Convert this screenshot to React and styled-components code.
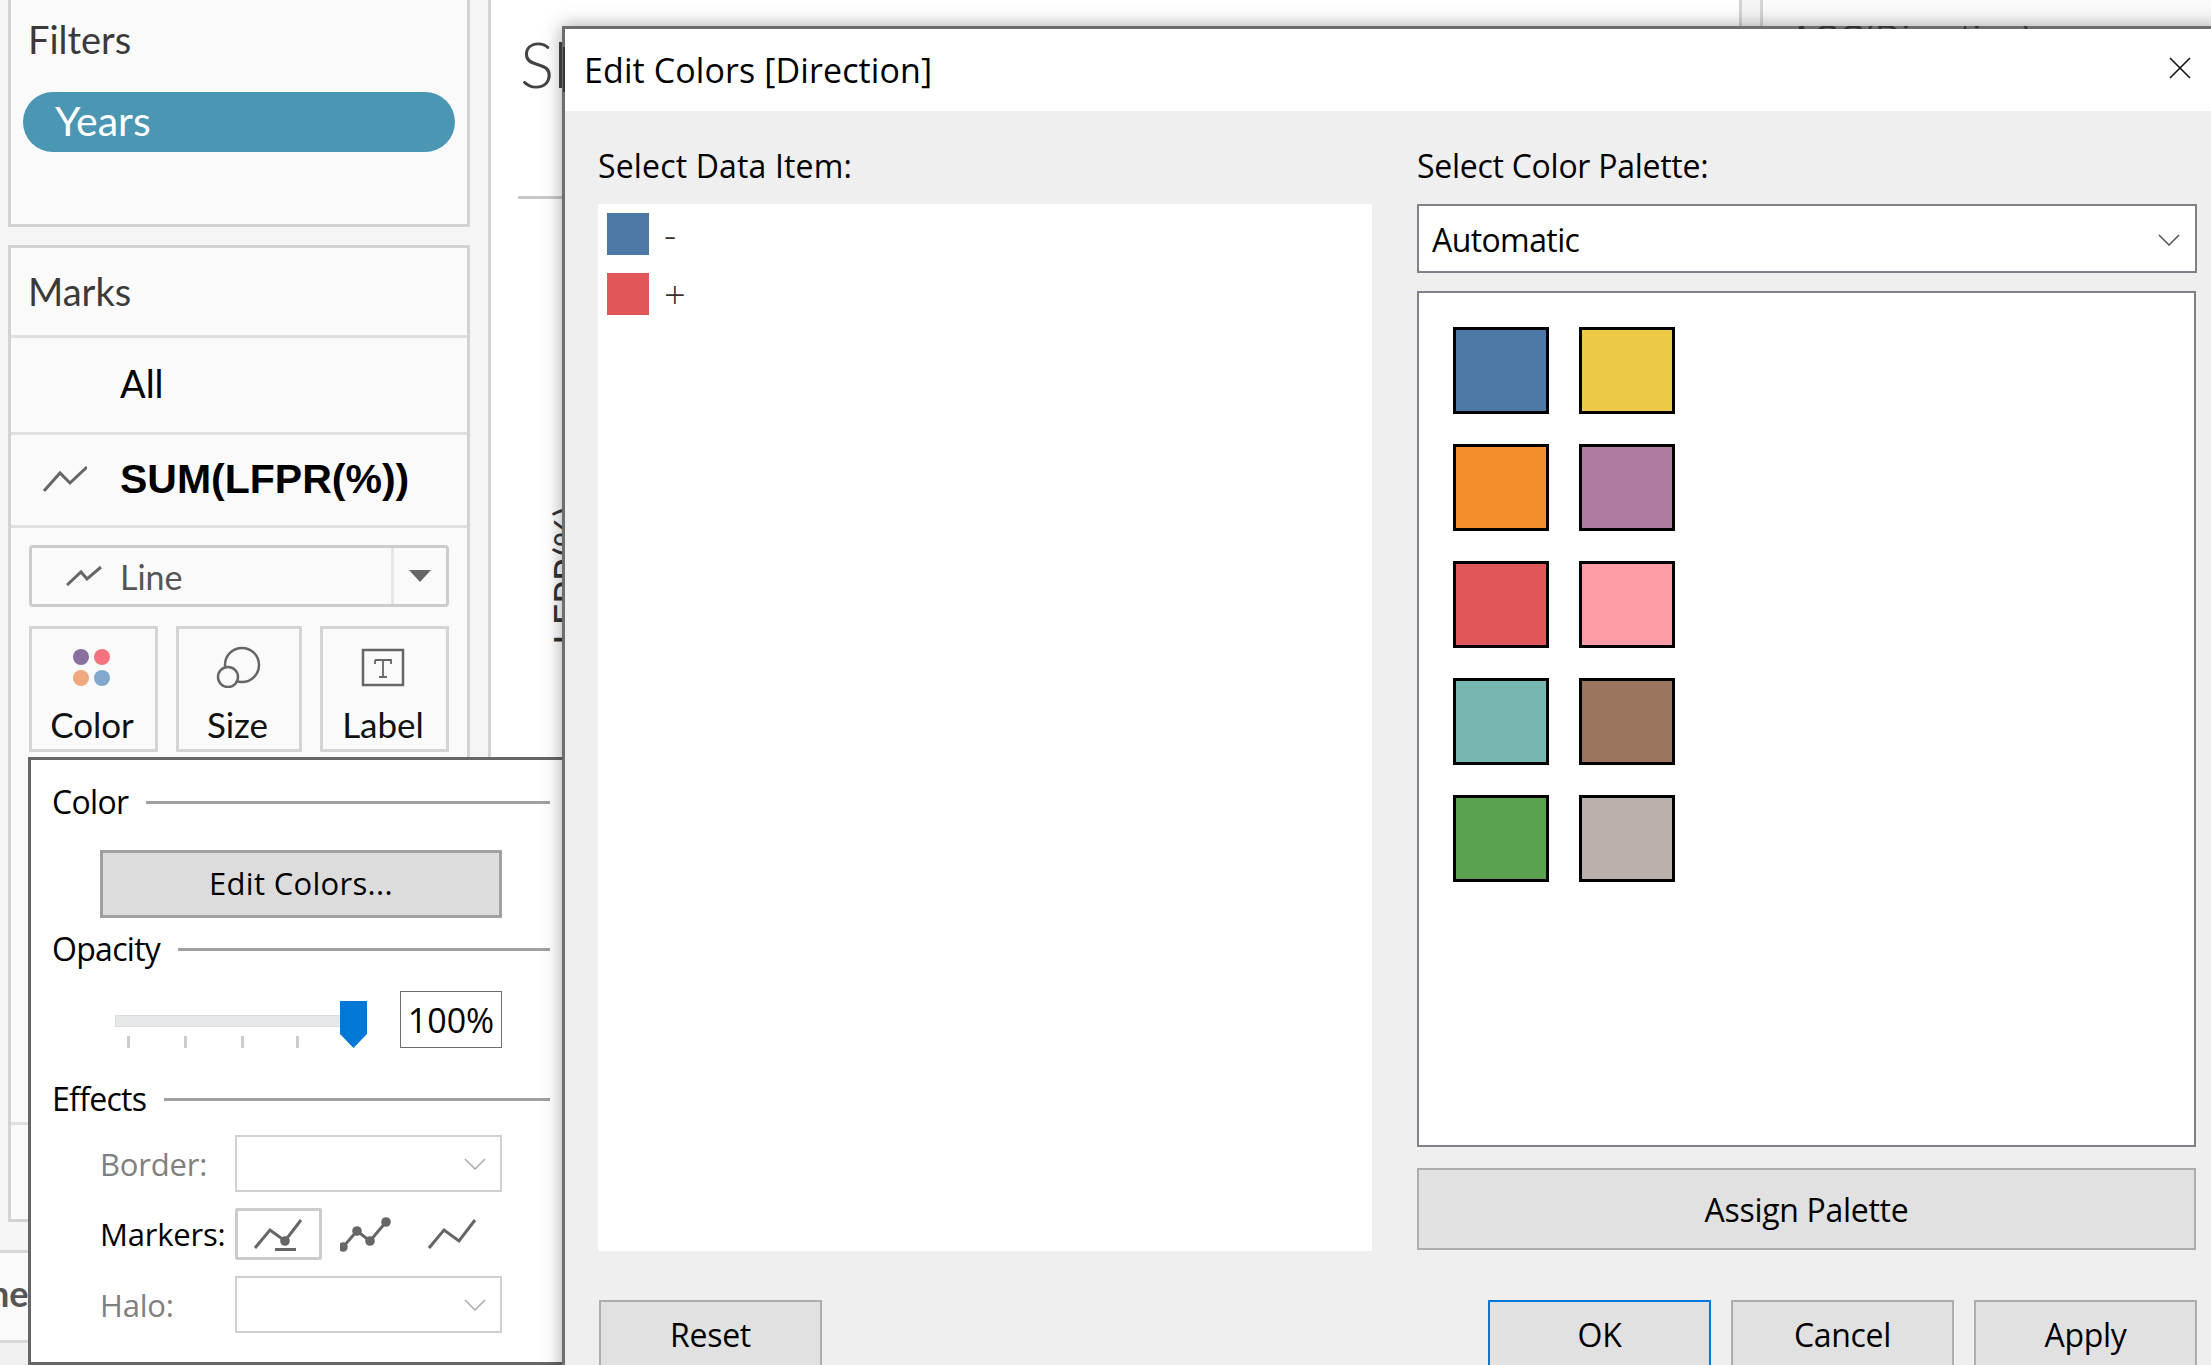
import React from 'react';
import styled, { createGlobalStyle } from 'styled-components';

const GlobalStyle = createGlobalStyle`
  html, body { margin: 0; padding: 0; background: #f5f5f5; }
  * { box-sizing: border-box; }
`;

const PANEL_FONT = '"Lato", "Liberation Sans", sans-serif';
const DIALOG_FONT = '"Open Sans", "Noto Sans", sans-serif';

const Page = styled.div`
  position: relative;
  display: flex;
  width: 2211px;
  height: 1365px;
  overflow: hidden;
  background: #f5f5f5;
`;

/* left shelf */
const Sidebar = styled.aside`
  width: 488px;
  flex: none;
  display: flex;
  flex-direction: column;
  font-family: ${PANEL_FONT};
`;

const FilterCard = styled.section`
  width: 462px;
  height: 227px;
  margin-left: 8px;
  padding: 19px 20px 0 17px;
  background: #fafafa;
  border: 3px solid #d3d3d3;
  border-top: none;
`;

const CardTitle = styled.div`
  font-size: 38px;
  line-height: 40px;
  color: #3a3a3a;
`;

const Pill = styled.div`
  height: 60px;
  margin: 33px -8px 0 -5px;
  padding-left: 32px;
  border-radius: 30px;
  background: #4b96b3;
  color: #fff;
  font-size: 41px;
  line-height: 58px;
`;

const MarksCard = styled.section`
  width: 462px;
  height: 977px;
  margin: 18px 0 0 8px;
  background: #fafafa;
  border: 3px solid #d3d3d3;
`;

const MarksHeader = styled.div`
  height: 90px;
  padding: 23px 20px 0 17px;
  border-bottom: 3px solid #e0e0e0;
`;

const MarkRow = styled.div`
  display: flex;
  align-items: center;
  height: ${(p) => p.$height}px;
  padding: 0 0 ${(p) => (p.$icon ? 2 : 4)}px ${(p) => (p.$icon ? 32 : 109)}px;
  gap: 33px;
  border-bottom: 3px solid #e0e0e0;
  color: #000;
  font-family: ${(p) => (p.$icon ? '"Liberation Sans", sans-serif' : PANEL_FONT)};
  font-size: ${(p) => (p.$icon ? 41 : 38)}px;
  font-weight: ${(p) => (p.$icon ? 700 : 400)};
`;

const MarkControls = styled.div`
  height: 597px;
  padding: 17px 18px 0;
  border-bottom: 3px solid #e0e0e0;
`;

const MarkSelect = styled.div`
  display: flex;
  height: 62px;
  border: 3px solid #ccc;
  border-radius: 4px;
`;

const MarkSelectValue = styled.div`
  flex: 1;
  display: flex;
  align-items: center;
  gap: 18px;
  padding-left: 34px;
  border-right: 3px solid #e6e6e6;
  color: #555;
  font-size: 34px;
`;

const MarkCaret = styled.div`
  width: 52px;
  display: flex;
  align-items: center;
  justify-content: center;
`;

const CaretShape = styled.div`
  width: 0;
  height: 0;
  border-left: 11px solid transparent;
  border-right: 11px solid transparent;
  border-top: 12px solid #666;
`;

const ShelfButtons = styled.div`
  display: grid;
  grid-template-columns: 129px 126px 129px;
  gap: 18px;
  margin-top: 19px;
`;

const ShelfButton = styled.div`
  height: 126px;
  display: flex;
  flex-direction: column;
  align-items: center;
  padding: 15px 3px 0 0;
  border: 3px solid #d4d4d4;
  color: #111;
  font-size: 35px;
  line-height: 42px;
`;

const ShelfIcon = styled.svg`
  display: block;
  width: 46px;
  height: 44px;
  margin-bottom: 15px;
`;

const BottomStrip = styled.div`
  flex: 1;
  margin-top: 28px;
  border-top: 3px solid #d8d8d8;
  background: #f0f0f0;
  overflow: hidden;
`;

const SheetName = styled.div`
  height: 90px;
  padding-top: 18px;
  margin-left: -11px;
  padding-left: 11px;
  text-indent: -11px;
  background: #fafafa;
  border-bottom: 3px solid #d8d8d8;
  color: #555;
  font-size: 36px;
  font-weight: 700;
  line-height: 44px;
`;

/* view area behind the dialog */
const Canvas = styled.main`
  width: 1254px;
  flex: none;
  background: #fff;
  border-left: 3px solid #d4d4d4;
  border-right: 3px solid #d4d4d4;
  font-family: ${PANEL_FONT};
`;

const ViewTitle = styled.div`
  height: 199px;
  margin-left: 27px;
  padding: 28px 0 0 2px;
  border-bottom: 3px solid #c8c8c8;
  color: #444;
  font-size: 64px;
  font-weight: 300;
  line-height: 72px;
`;

const AxisTitle = styled.div`
  margin: 309px 0 0 54px;
  height: 137px;
  writing-mode: vertical-rl;
  transform: rotate(180deg);
  color: #333;
  font-size: 38px;
  line-height: 44px;
  white-space: nowrap;
`;

const Gutter = styled.div`
  width: 18px;
  flex: none;
`;

const RightShelf = styled.aside`
  flex: 1;
  background: #fafafa;
  border-left: 3px solid #d4d4d4;
`;

/* colour popover */
const Popover = styled.div`
  position: absolute;
  left: 28px;
  top: 757px;
  width: 540px;
  height: 608px;
  padding: 22px 15px 0 21px;
  background: #fff;
  border: 3px solid #666;
  font-family: ${DIALOG_FONT};
  color: #000;
`;

const SectionHead = styled.div`
  display: flex;
  align-items: center;
  gap: 18px;
  height: 40px;
  margin-top: ${(p) => p.$top || 0}px;
  font-size: 32px;
  line-height: 40px;
  letter-spacing: -0.7px;
`;

const SectionRule = styled.div`
  flex: 1;
  height: 3px;
  background: #a0a0a0;
`;

const EditButton = styled.div`
  width: 402px;
  height: 68px;
  margin: 28px 0 0 48px;
  padding-bottom: 2px;
  display: flex;
  align-items: center;
  justify-content: center;
  background: #dcdcdc;
  border: 3px solid #a0a0a0;
  font-size: 31px;
  letter-spacing: 0.3px;
`;

const OpacityRow = styled.div`
  display: flex;
  height: 57px;
  margin: 22px 0 0 63px;
`;

const Slider = styled.div`
  position: relative;
  width: 285px;
  height: 57px;
`;

const Track = styled.div`
  position: absolute;
  left: 0;
  top: 24px;
  width: 226px;
  height: 12px;
  background: #e6e9e9;
  border: 1px solid #dcdcdc;
`;

const Tick = styled.div`
  position: absolute;
  left: ${(p) => p.$x}px;
  top: 45px;
  width: 3px;
  height: 12px;
  background: #ccc;
`;

const Thumb = styled.svg`
  position: absolute;
  left: 225px;
  top: 10px;
  width: 27px;
  height: 47px;
`;

const PercentBox = styled.div`
  width: 102px;
  height: 57px;
  display: flex;
  align-items: center;
  justify-content: center;
  border: 1px solid #6e6e6e;
  font-size: 34px;
`;

const EffectsGrid = styled.div`
  display: grid;
  grid-template-columns: 135px 267px;
  grid-auto-rows: auto;
  row-gap: 16px;
  align-items: center;
  margin: 16px 0 0 48px;
`;

const EffectLabel = styled.div`
  font-size: 31px;
  letter-spacing: -0.2px;
  color: ${(p) => (p.$off ? '#808080' : '#000')};
`;

const DisabledSelect = styled.div`
  display: flex;
  align-items: center;
  justify-content: flex-end;
  height: 57px;
  padding-right: 14px;
  border: 2px solid #d0d0d0;
`;

const MarkerOptions = styled.div`
  display: flex;
  align-items: center;
  height: 52px;
`;

const MarkerOption = styled.div`
  width: ${(p) => p.$width}px;
  height: 52px;
  display: flex;
  align-items: center;
  justify-content: center;
  border: 3px solid ${(p) => (p.$active ? '#ccc' : 'transparent')};
  border-radius: 2px;
`;

const Chevron = styled.svg`
  display: block;
  width: 22px;
  height: 12px;
`;

/* edit colours dialog */
const Dialog = styled.div`
  position: absolute;
  left: 562px;
  top: 26px;
  width: 1660px;
  height: 1400px;
  display: flex;
  flex-direction: column;
  background: #efefef;
  border: 3px solid #6e6e6e;
  box-shadow: 0 0 18px rgba(0, 0, 0, 0.35);
  font-family: ${DIALOG_FONT};
  color: #000;
`;

const TitleSliver = styled.div`
  position: absolute;
  left: -2px;
  top: 18px;
  width: 2px;
  height: 45px;
  background: #3b342c;
`;

/* tops of the shelf text behind the dialog show through its edge */
const EdgePeek = styled.div`
  position: absolute;
  left: 1225px;
  top: -3px;
  height: 3px;
  overflow: hidden;
  color: #333;
  font-family: ${PANEL_FONT};
  font-size: 34px;
  line-height: 40px;
  letter-spacing: 1px;
  white-space: nowrap;
`;

const EdgePeekText = styled.div`
  margin-top: -9px;
`;

const DialogHeader = styled.div`
  display: flex;
  align-items: center;
  justify-content: space-between;
  height: 82px;
  padding: 0 28px 0 19px;
  background: #fff;
  font-size: 34px;
  letter-spacing: 0.1px;
`;

const DialogBody = styled.div`
  display: grid;
  grid-template-columns: 774px 780px;
  column-gap: 45px;
  padding-left: 33px;
`;

const FieldLabel = styled.div`
  height: 93px;
  padding-top: 33px;
  font-size: 32px;
  line-height: 44px;
  letter-spacing: ${(p) => p.$track}px;
`;

const DataList = styled.div`
  height: 1047px;
  padding: 9px 9px 0;
  background: #fff;
`;

const DataItem = styled.div`
  display: flex;
  align-items: center;
  gap: 15px;
  height: 42px;
  margin-bottom: 18px;
  color: #333;
  font-size: 38px;
  font-weight: 300;
`;

const ItemSwatch = styled.div`
  width: 42px;
  height: 42px;
  background: ${(p) => p.$color};
`;

const PaletteSelect = styled.div`
  display: flex;
  align-items: center;
  justify-content: space-between;
  height: 69px;
  padding: 2px 15px 0 13px;
  background: #fff;
  border: 2px solid #808088;
  font-size: 32px;
  letter-spacing: -0.6px;
`;

const PaletteBox = styled.div`
  display: grid;
  grid-template-columns: 96px 96px;
  grid-auto-rows: 87px;
  gap: 30px;
  align-content: start;
  height: 856px;
  width: 779px;
  margin-top: 18px;
  padding: 34px 0 0 34px;
  background: #fff;
  border: 2px solid #808088;
`;

const PaletteSwatch = styled.div`
  background: ${(p) => p.$color};
  border: 3px solid #000;
`;

const GreyButton = styled.div`
  display: flex;
  align-items: center;
  justify-content: center;
  background: #e1e1e1;
  border: 2px solid ${(p) => (p.$focus ? '#0078d7' : '#adadad')};
  font-size: 32px;
  letter-spacing: -0.3px;
`;

const AssignButton = styled(GreyButton)`
  width: 779px;
  height: 82px;
  margin-top: 21px;
`;

const DialogFooter = styled.div`
  display: flex;
  justify-content: space-between;
  width: 1598px;
  margin: 49px 0 0 34px;
`;

const FooterGroup = styled.div`
  display: flex;
  gap: 20px;
`;

const FooterButton = styled(GreyButton)`
  width: 223px;
  height: 90px;
  padding-bottom: 22px;
`;

const CloseIcon = styled.svg`
  width: 22px;
  height: 22px;
  margin-bottom: 4px;
`;

const LineIcon = ({ width, height, points }) => (
  <svg width={width} height={height} viewBox={`0 0 ${width} ${height}`} fill="none">
    <polyline points={points} stroke="#666" strokeWidth="3" strokeLinejoin="miter" />
  </svg>
);

const ChevronIcon = ({ color }) => (
  <Chevron viewBox="0 0 22 12" fill="none">
    <path d="M1 1l10 10L21 1" stroke={color} strokeWidth="1.5" />
  </Chevron>
);

const MarkerIcon = ({ dots, underline, points }) => (
  <svg width="52" height="36" viewBox="0 0 52 36" fill="none">
    <polyline points={points.map((pt) => pt.join(',')).join(' ')} stroke="#666" strokeWidth="3" />
    {dots.map(([x, y]) => (
      <circle key={x} cx={x} cy={y} r="4.8" fill="#666" />
    ))}
    {underline && <rect x="22" y="32" width="21" height="3" fill="#666" />}
  </svg>
);

const swatches = [
  '#4e79a7',
  '#edc948',
  '#f28e2b',
  '#b07aa1',
  '#e15759',
  '#ff9da7',
  '#76b7b2',
  '#9c755f',
  '#59a14f',
  '#bab0ac',
];

const ticks = [12, 69, 126, 181];

const markerA = [[2, 32], [17, 14], [32, 25], [48, 4]];
const markerB = [[3, 31], [17, 15], [30, 25], [46, 6]];

export default function App() {
  return (
    <Page>
      <GlobalStyle />
      <Sidebar>
        <FilterCard>
          <CardTitle>Filters</CardTitle>
          <Pill>Years</Pill>
        </FilterCard>
        <MarksCard>
          <MarksHeader>
            <CardTitle>Marks</CardTitle>
          </MarksHeader>
          <MarkRow $height={97}>All</MarkRow>
          <MarkRow $height={93} $icon>
            <LineIcon width={44} height={26} points="1,25 17,7 27,17 44,1" />
            SUM(LFPR(%))
          </MarkRow>
          <MarkControls>
            <MarkSelect>
              <MarkSelectValue>
                <LineIcon width={36} height={20} points="1,19 15,6 21,13 35,1" />
                Line
              </MarkSelectValue>
              <MarkCaret>
                <CaretShape />
              </MarkCaret>
            </MarkSelect>
            <ShelfButtons>
              <ShelfButton>
                <ShelfIcon viewBox="0 0 46 44">
                  <circle cx="12" cy="13" r="8" fill="#8a709f" />
                  <circle cx="33" cy="13" r="8" fill="#f4727f" />
                  <circle cx="12" cy="34" r="8" fill="#f1a87c" />
                  <circle cx="33" cy="34" r="8" fill="#83a8cd" />
                </ShelfIcon>
                Color
              </ShelfButton>
              <ShelfButton>
                <ShelfIcon viewBox="0 0 46 44" fill="none" stroke="#666" strokeWidth="2.5">
                  <circle cx="27" cy="21" r="17" />
                  <circle cx="13" cy="33" r="10" fill="#fafafa" />
                </ShelfIcon>
                Size
              </ShelfButton>
              <ShelfButton>
                <ShelfIcon viewBox="0 0 46 44" fill="none">
                  <rect x="3" y="6" width="40" height="35" stroke="#666" strokeWidth="2.5" />
                  <path
                    d="M15 16h16v4M15 20v-4M23 16v17M19 33h8"
                    stroke="#666"
                    strokeWidth="1.8"
                  />
                </ShelfIcon>
                Label
              </ShelfButton>
            </ShelfButtons>
          </MarkControls>
        </MarksCard>
        <BottomStrip>
          <SheetName>ned</SheetName>
        </BottomStrip>
      </Sidebar>
      <Canvas>
        <ViewTitle>Sl</ViewTitle>
        <AxisTitle>LFPR(%)</AxisTitle>
      </Canvas>
      <Gutter />
      <RightShelf />

      <Popover>
        <SectionHead>
          Color
          <SectionRule />
        </SectionHead>
        <EditButton>Edit Colors...</EditButton>
        <SectionHead $top={11}>
          Opacity
          <SectionRule />
        </SectionHead>
        <OpacityRow>
          <Slider>
            <Track />
            {ticks.map((x) => (
              <Tick key={x} $x={x} />
            ))}
            <Thumb viewBox="0 0 27 47">
              <path d="M0 0h27v33L13.5 47 0 33z" fill="#0078d7" />
            </Thumb>
          </Slider>
          <PercentBox>100%</PercentBox>
        </OpacityRow>
        <SectionHead $top={31}>
          Effects
          <SectionRule />
        </SectionHead>
        <EffectsGrid>
          <EffectLabel $off>Border:</EffectLabel>
          <DisabledSelect>
            <ChevronIcon color="#aaa" />
          </DisabledSelect>
          <EffectLabel>Markers:</EffectLabel>
          <MarkerOptions>
            <MarkerOption $active $width={87}>
              <MarkerIcon points={markerA} dots={[[32, 25]]} underline />
            </MarkerOption>
            <MarkerOption $width={87}>
              <MarkerIcon points={markerB} dots={markerB} />
            </MarkerOption>
            <MarkerOption $width={87}>
              <MarkerIcon points={markerA} dots={[]} />
            </MarkerOption>
          </MarkerOptions>
          <EffectLabel $off>Halo:</EffectLabel>
          <DisabledSelect>
            <ChevronIcon color="#aaa" />
          </DisabledSelect>
        </EffectsGrid>
      </Popover>

      <Dialog>
        <TitleSliver />
        <EdgePeek>
          <EdgePeekText>AGG(Direction)</EdgePeekText>
        </EdgePeek>
        <DialogHeader>
          Edit Colors [Direction]
          <CloseIcon viewBox="0 0 22 22" fill="none">
            <path d="M1 1l20 20M21 1L1 21" stroke="#111" strokeWidth="1.6" />
          </CloseIcon>
        </DialogHeader>
        <DialogBody>
          <div>
            <FieldLabel $track={0.15}>Select Data Item:</FieldLabel>
            <DataList>
              <DataItem>
                <ItemSwatch $color="#4e79a7" />-
              </DataItem>
              <DataItem>
                <ItemSwatch $color="#e15759" />+
              </DataItem>
            </DataList>
          </div>
          <div>
            <FieldLabel $track={-0.27}>Select Color Palette:</FieldLabel>
            <PaletteSelect>
              Automatic
              <ChevronIcon color="#555" />
            </PaletteSelect>
            <PaletteBox>
              {swatches.map((color) => (
                <PaletteSwatch key={color} $color={color} />
              ))}
            </PaletteBox>
            <AssignButton>Assign Palette</AssignButton>
          </div>
        </DialogBody>
        <DialogFooter>
          <FooterButton>Reset</FooterButton>
          <FooterGroup>
            <FooterButton $focus>OK</FooterButton>
            <FooterButton>Cancel</FooterButton>
            <FooterButton>Apply</FooterButton>
          </FooterGroup>
        </DialogFooter>
      </Dialog>
    </Page>
  );
}
